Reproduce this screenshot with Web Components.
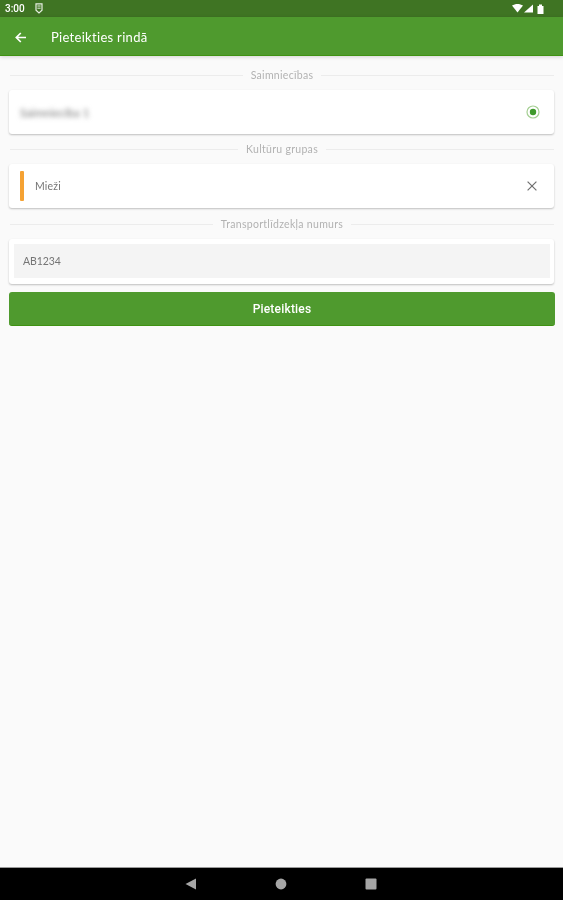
<!DOCTYPE html>
<html lang="lv">
<head>
<meta charset="utf-8">
<title>Pieteikties rindā</title>
<style>
  html, body { margin: 0; height: 100%; background: #fafafa; }
  body { font-family: Lato, "Noto Sans", sans-serif; overflow: hidden; }
</style>
</head>
<body>
<queue-app>
  <status-bar slot="top"></status-bar>
  <app-bar slot="top" title="Pieteikties rindā"></app-bar>

  <section-label>Saimniecības</section-label>
  <form-card style="height:44px">
    <farm-row>Saimniecība 1</farm-row>
  </form-card>

  <section-label style="margin-top:7px">Kultūru grupas</section-label>
  <form-card style="height:44px">
    <crop-row>Mieži</crop-row>
  </form-card>

  <section-label style="margin-top:8px">Transportlīdzekļa numurs</section-label>
  <form-card style="height:45px">
    <plate-field value="AB1234"></plate-field>
  </form-card>

  <submit-button>Pieteikties</submit-button>

  <nav-bar slot="bottom"></nav-bar>
</queue-app>

<script>
class QueueApp extends HTMLElement {
  constructor() {
    super();
    this.attachShadow({ mode: "open" });
    // the reference is an upscaled capture, everything is a little soft
    this.shadowRoot.innerHTML = `
      <style>
        :host { display: flex; flex-direction: column; height: 100vh; background: #fafafa; filter: blur(.4px); }
        .content { flex: 1; display: flex; flex-direction: column; padding: 11px 8px 0 9px; min-height: 0; }
      </style>
      <slot name="top"></slot>
      <div class="content"><slot></slot></div>
      <slot name="bottom"></slot>
    `;
  }
}

class StatusBar extends HTMLElement {
  constructor() {
    super();
    this.attachShadow({ mode: "open" });
    this.shadowRoot.innerHTML = `
      <style>
        :host { display: flex; align-items: center; height: 17px; background: #3f7423; color: #fff; padding: 0 19px 0 5px; font-size: 10px; font-weight: 500; font-family: Roboto, sans-serif; }
        .time { margin-right: 10px; }
        .right { margin-left: auto; display: flex; align-items: center; gap: 1px; }
        svg { display: block; fill: #fff; }
      </style>
      <span class="time">3:00</span>
      <svg width="8" height="11" viewBox="0 0 8 11"><path d="M1 .8h6v6.4L4 10 1 7.2z" fill="none" stroke="#e8efe3" stroke-width="1.2"/><path d="M2.4 3h3.2M2.4 5.2h3.2" stroke="#e8efe3" stroke-width="1"/></svg>
      <div class="right">
        <svg width="11" height="9" viewBox="0 0 11 9"><path d="M0 1.6C3.2-.5 7.8-.5 11 1.6L5.5 8.6z"/></svg>
        <svg width="9" height="9" viewBox="0 0 9 9"><path d="M0 8.5 9 .5v8z"/></svg>
        <svg width="7" height="10" viewBox="0 0 7 10" style="margin-left:3px"><path d="M.5 2h1.5V.5h3V2h1.5v8H.5z"/></svg>
      </div>
    `;
  }
}

class AppBar extends HTMLElement {
  constructor() {
    super();
    this.attachShadow({ mode: "open" });
    this.shadowRoot.innerHTML = `
      <style>
        :host { display: flex; align-items: center; height: 39px; background: #4f9a2e; color: #fff; border-bottom: 1px solid #3f9212; box-sizing: border-box; box-shadow: 0 1px 4px rgba(0,0,0,.16); padding: 2px 0 0 15px; font-size: 13px; position: relative; letter-spacing: .3px; }
        svg { display: block; margin-right: 25px; }
      </style>
      <svg width="11" height="11" viewBox="0 0 11 11"><path d="M11 5.5H1.6M5.8 1 1.3 5.5l4.5 4.5" fill="none" stroke="#fff" stroke-width="1.7"/></svg>
      <span></span>
    `;
    this.shadowRoot.querySelector("span").textContent = this.getAttribute("title");
  }
}

class SectionLabel extends HTMLElement {
  constructor() {
    super();
    this.attachShadow({ mode: "open" });
    this.shadowRoot.innerHTML = `
      <style>
        :host { display: flex; align-items: center; gap: 8px; height: 16px; color: #b2b2b2; font-size: 10.5px; letter-spacing: .3px; padding: 0 1px; }
        i { flex: 1; height: 1px; background: #ececec; }
      </style>
      <i></i><slot></slot><i></i>
    `;
  }
}

class FormCard extends HTMLElement {
  constructor() {
    super();
    this.attachShadow({ mode: "open" });
    this.shadowRoot.innerHTML = `
      <style>
        :host { display: block; box-sizing: border-box; margin-top: 7px; background: #fff; border-radius: 3px; box-shadow: 0 1px 2px rgba(0,0,0,.24); margin-right: 1px; }
      </style>
      <slot></slot>
    `;
  }
}

class FarmRow extends HTMLElement {
  constructor() {
    super();
    this.attachShadow({ mode: "open" });
    this.shadowRoot.innerHTML = `
      <style>
        :host { display: flex; align-items: center; height: 100%; padding: 0 14px 0 11px; }
        .blurred { font-size: 11.5px; color: #777; filter: blur(2.6px); }
        svg { display: block; margin-left: auto; }
      </style>
      <span class="blurred"><slot></slot></span>
      <svg width="14" height="14" viewBox="0 0 14 14"><circle cx="7" cy="7" r="6" fill="none" stroke="#a5cf93" stroke-width="1.2"/><circle cx="7" cy="7" r="3.2" fill="#3f9a2c"/></svg>
    `;
  }
}

class CropRow extends HTMLElement {
  constructor() {
    super();
    this.attachShadow({ mode: "open" });
    this.shadowRoot.innerHTML = `
      <style>
        :host { display: flex; align-items: center; height: 100%; padding: 0 17px 0 11px; color: #757575; font-size: 10.5px; letter-spacing: .2px; }
        .mark { width: 4px; height: 30px; border-radius: 1px; background: #f5a233; margin-right: 11px; }
        svg { display: block; margin-left: auto; }
      </style>
      <div class="mark"></div>
      <slot></slot>
      <svg width="10" height="10" viewBox="0 0 10 10"><path d="M.6.6l8.8 8.8M9.4.6.6 9.4" fill="none" stroke="#707070" stroke-width="1.2"/></svg>
    `;
  }
}

class PlateField extends HTMLElement {
  constructor() {
    super();
    this.attachShadow({ mode: "open" });
    this.shadowRoot.innerHTML = `
      <style>
        :host { display: block; box-sizing: border-box; height: 100%; padding: 5px 4px 6px 5px; }
        .field { height: 100%; display: flex; align-items: center; box-sizing: border-box; padding-left: 9px; background: #f4f4f4; color: #757575; font-size: 10.5px; letter-spacing: -.1px; }
      </style>
      <div class="field"></div>
    `;
    this.shadowRoot.querySelector(".field").textContent = this.getAttribute("value");
  }
}

class SubmitButton extends HTMLElement {
  constructor() {
    super();
    this.attachShadow({ mode: "open" });
    this.shadowRoot.innerHTML = `
      <style>
        :host { display: flex; align-items: center; justify-content: center; height: 34px; margin-top: 8px; box-sizing: border-box; background: #4f9a2e; border-radius: 3px; border-bottom: 1px solid #3f9212; color: #fff; font-family: Roboto, sans-serif; font-size: 12px; font-weight: 500; letter-spacing: .2px; }
      </style>
      <slot></slot>
    `;
  }
}

class NavBar extends HTMLElement {
  constructor() {
    super();
    this.attachShadow({ mode: "open" });
    this.shadowRoot.innerHTML = `
      <style>
        :host { display: flex; align-items: center; justify-content: center; gap: 78px; height: 33px; background: #000; border-top: 1px solid #9a9a9a; box-sizing: border-box; padding-right: 1px; }
        svg { display: block; fill: #a6a6a6; }
      </style>
      <svg width="12" height="12" viewBox="0 0 12 12"><path d="M11 .5v11L.5 6z"/></svg>
      <svg width="12" height="12" viewBox="0 0 12 12"><circle cx="6" cy="6" r="5.4"/></svg>
      <svg width="12" height="12" viewBox="0 0 12 12"><rect x=".5" y=".5" width="11" height="11" rx="1"/></svg>
    `;
  }
}

customElements.define("queue-app", QueueApp);
customElements.define("status-bar", StatusBar);
customElements.define("app-bar", AppBar);
customElements.define("section-label", SectionLabel);
customElements.define("form-card", FormCard);
customElements.define("farm-row", FarmRow);
customElements.define("crop-row", CropRow);
customElements.define("plate-field", PlateField);
customElements.define("submit-button", SubmitButton);
customElements.define("nav-bar", NavBar);
</script>
</body>
</html>
